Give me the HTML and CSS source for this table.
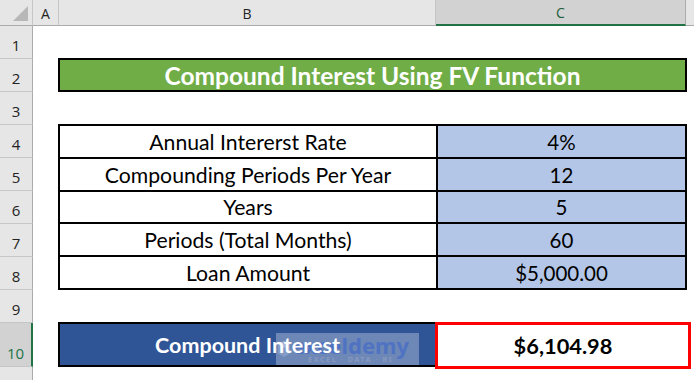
FILE: index.html
```html
<!DOCTYPE html>
<html>
<head>
<meta charset="utf-8">
<link rel="stylesheet" href="styles.css">
</head>
<body>
<div class="sheet">
  <div class="corner"><span class="tri"></span></div>
  <div class="colhead">A</div>
  <div class="colhead">B</div>
  <div class="colhead sel">C</div>
  <div class="colhead last"></div>

  <div class="rowhead r1">1</div>
  <div class="rowhead r2">2</div>
  <div class="rowhead r3">3</div>
  <div class="rowhead r4">4</div>
  <div class="rowhead r5">5</div>
  <div class="rowhead r6">6</div>
  <div class="rowhead r7">7</div>
  <div class="rowhead r8">8</div>
  <div class="rowhead r9">9</div>
  <div class="rowhead r10 sel">10</div>
  <div class="rowhead r11"></div>

  <div class="title">Compound Interest Using FV Function</div>

  <div class="table">
    <div class="lab">Annual Intererst Rate</div><div class="val">4%</div>
    <div class="lab">Compounding Periods Per Year</div><div class="val">12</div>
    <div class="lab">Years</div><div class="val">5</div>
    <div class="lab">Periods (Total Months)</div><div class="val">60</div>
    <div class="lab">Loan Amount</div><div class="val">$5,000.00</div>
  </div>

  <div class="result">
    <div class="rlab"><span class="rtext">Compound Interest</span>
      <div class="wm">
        <svg class="wm-logo" width="14" height="18" viewBox="0 0 14 18"><path d="M7 1 L13 4.5 L13 13.5 L7 17 L1 13.5 L1 4.5 Z" fill="#8ea3cf" opacity="0.7"/><path d="M7 1 L13 4.5 L7 8 L1 4.5 Z" fill="#b3c1e0" opacity="0.7"/></svg>
        <div class="wm-text">
          <span class="wm-name">exceldemy</span>
          <span class="wm-sub">EXCEL · DATA · BI</span>
        </div>
      </div>
    </div>
    <div class="rval">$6,104.98</div>
  </div>
</div>
</body>
</html>
```

FILE: styles.css
```css
* { box-sizing: border-box; margin: 0; padding: 0; }
html, body { width: 694px; height: 380px; overflow: hidden; background: #fff; }
body { font-family: "Lato", "Liberation Sans", sans-serif; }

.sheet {
  position: relative;
  display: grid;
  grid-template-columns: 33px 26px 377px 250px 8px;
  grid-template-rows: 26px repeat(9, 33px) 44px 13px;
  width: 694px;
  height: 380px;
  background: #fff;
}

.corner {
  grid-column: 1; grid-row: 1;
  background: #e6e6e6;
  border-right: 1px solid #c6c6c6;
  border-bottom: 1px solid #ababab;
  position: relative;
}
.tri {
  position: absolute; right: 4px; bottom: 4px;
  width: 0; height: 0;
  border-left: 15px solid transparent;
  border-bottom: 15px solid #b7b7b7;
}

.colhead {
  grid-row: 1;
  background: #e6e6e6;
  border-right: 1px solid #c6c6c6;
  border-bottom: 1px solid #ababab;
  font-family: "Open Sans", "Noto Sans", sans-serif;
  font-size: 14px;
  color: #222;
  display: flex; align-items: center; justify-content: center;
  padding-top: 1px;
}
.colhead.sel {
  background: #d2d2d2;
  border-right: 1px solid #ababab;
  border-bottom: 2px solid #217346;
  color: #1d5e3b;
}
.colhead.last { border-right: none; }

.rowhead {
  grid-column: 1;
  background: #e6e6e6;
  border-right: 1px solid #ababab;
  border-bottom: 1px solid #c6c6c6;
  font-family: "Open Sans", "Noto Sans", sans-serif;
  font-size: 15px;
  color: #222;
  display: flex; align-items: flex-end; justify-content: center;
  padding-bottom: 3px;
}
.r1 { grid-row: 2; } .r2 { grid-row: 3; } .r3 { grid-row: 4; }
.r4 { grid-row: 5; } .r5 { grid-row: 6; } .r6 { grid-row: 7; }
.r7 { grid-row: 8; } .r8 { grid-row: 9; } .r9 { grid-row: 10; }
.r10 { grid-row: 11; } .r11 { grid-row: 12; border-bottom: none; }
.rowhead.sel {
  background: #d2d2d2;
  border-right: 2px solid #217346;
  color: #217346;
}

.title {
  grid-column: 3 / 5; grid-row: 3;
  margin: -1px -1px 0 -1px;
  background: #70ad47;
  border: 2px solid #000;
  color: #fff;
  font-weight: 700;
  font-size: 24.5px;
  display: flex; align-items: center; justify-content: center;
  padding-top: 1px;
}

.table {
  grid-column: 3 / 5; grid-row: 5 / 10;
  margin: -1px -1px 0 -1px;
  display: grid;
  grid-template-columns: 376px 1fr;
  grid-template-rows: repeat(5, 1fr);
  gap: 2px;
  padding: 2px;
  background: #000;
}
.lab, .val {
  display: flex; align-items: center; justify-content: center;
  color: #000;
  padding-top: 1px;
}
.lab { background: #fff; font-size: 21.2px; }
.val { background: #b4c6e7; font-size: 20.5px; }

.result {
  grid-column: 3 / 5; grid-row: 11;
  margin: -1px -1px 0 -1px;
  display: grid;
  grid-template-columns: 377px 1fr;
  position: relative;
}
.rlab {
  position: relative;
  background: #2f5597;
  border: 2px solid #000;
  border-right: none;
  color: #fff;
  font-weight: 700;
  font-size: 21.5px;
  display: flex; align-items: center; justify-content: center;
}
.rtext { position: relative; z-index: 3; }
.rval {
  background: #fff;
  border: 3px solid #ff0000;
  margin: 0 -4px -2px 0;
  font-weight: 700;
  font-size: 21.8px;
  color: #000;
  display: flex; align-items: center; justify-content: center;
}

.wm {
  position: absolute;
  left: 216px; top: 9px;
  width: 143px; height: 32px;
  background: rgba(255, 255, 255, 0.3);
  display: flex; align-items: center;
  padding-left: 1px;
  gap: 1px;
  z-index: 2;
}
.wm-text { display: flex; flex-direction: column; align-items: center; line-height: 1; }
.wm-name {
  font-family: "Noto Sans", sans-serif;
  font-weight: 700;
  font-size: 22px;
  line-height: 20px;
  color: #4f73c2;
}
.wm-sub {
  font-family: "Noto Sans", sans-serif;
  font-size: 7.5px;
  font-weight: 700;
  letter-spacing: 1.4px;
  color: #8798c0;
  margin-top: 1px;
}
```
